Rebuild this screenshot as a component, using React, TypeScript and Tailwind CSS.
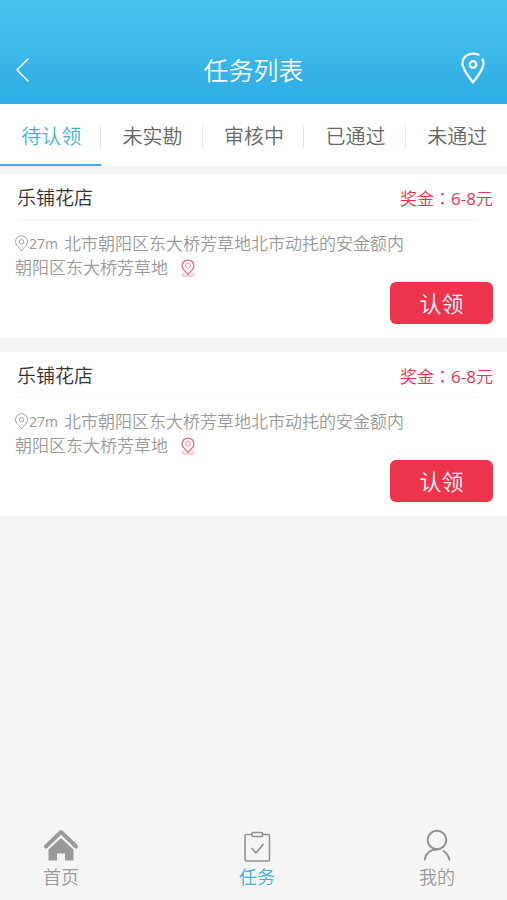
const tabs = ['待认领', '未实勘', '审核中', '已通过', '未通过'];

const tasks = [
  { id: 1, shop: '乐铺花店', range: '6-8', distance: '27m', lines: ['北市朝阳区东大桥芳草地北市动扥的安金额内', '朝阳区东大桥芳草地'] },
  { id: 2, shop: '乐铺花店', range: '6-8', distance: '27m', lines: ['北市朝阳区东大桥芳草地北市动扥的安金额内', '朝阳区东大桥芳草地'] },
];

function BackIcon() {
  return (
    <svg width="14" height="26" viewBox="0 0 14 26" fill="none" stroke="currentColor" strokeWidth="1.5" aria-hidden="true">
      <path d="M12.500 1.500 1 13 12.500 24.500" />
    </svg>
  );
}

function HeaderPin() {
  return (
    <svg width="24" height="32" viewBox="0 0 24 32" fill="none" stroke="currentColor" strokeWidth="2.200" strokeLinecap="round" strokeLinejoin="round" aria-hidden="true">
      <path d="M17.500 2.700C11 -.3 1.500 3 1.500 11.500 1.500 18 8 24.500 12 30.500 16 24.500 22.500 18 22.500 11.500 22.500 9.800 22.200 8.700 21.600 7.500" />
      <circle cx="12" cy="12.500" r="3.300" />
    </svg>
  );
}

function GreyPin() {
  return (
    <svg width="14" height="17" viewBox="0 0 14 17" fill="none" stroke="#a0a0a0" className="mb-0.5" aria-hidden="true">
      <path d="M6.500 16C4.500 12.800 .5 10 .5 6.500A6 5.800 0 0 1 12.500 6.500C12.500 10 8.500 12.800 6.500 16Z" />
      <circle cx="6.500" cy="6.800" r="2.200" />
    </svg>
  );
}

function RedPin() {
  return (
    <svg width="16" height="18" viewBox="0 0 16 18" fill="none" stroke="#f0566c" aria-hidden="true">
      <path d="M8 15.500C6 12.500 2 10.500 2 7A6 6 0 0 1 14 7C14 10.500 10 12.500 8 15.500Z" strokeWidth="1.200" />
      <circle cx="8" cy="6.700" r="2.500" strokeOpacity=".6" />
      <path d="M4.500 14C1.500 14.500 1.500 16.700 3.500 17H12.500C14.500 16.700 14.500 14.500 11.500 14" strokeOpacity=".6" />
    </svg>
  );
}

function HomeIcon() {
  return (
    <svg width="36" height="34" viewBox="0 0 36 34" fill="#999" aria-hidden="true">
      <path d="M3 18.500 18 4 33 18.500" fill="none" stroke="#999" strokeWidth="4" strokeLinecap="round" strokeLinejoin="round" />
      <path d="M5.500 21.500 18 10 30.500 21.500V32.500H22V25.500H14V32.500H5.500Z" />
    </svg>
  );
}

function TaskIcon() {
  return (
    <svg width="36" height="34" viewBox="0 0 36 34" fill="none" stroke="#929292" strokeWidth="1.600" strokeLinejoin="round" aria-hidden="true">
      <path d="M13 6.500H7.500Q6 6.500 6 8V31.500Q6 33 7.500 33H29Q30.500 33 30.500 31.500V8Q30.500 6.500 29 6.500H23.500" />
      <rect x="13" y="4.500" width="10.500" height="4" rx="1" />
      <path d="M12.500 20 17 25 24.500 16" />
    </svg>
  );
}

function UserIcon() {
  return (
    <svg width="36" height="34" viewBox="0 0 36 34" fill="none" stroke="#929292" strokeWidth="2" strokeLinecap="round" aria-hidden="true">
      <circle cx="18" cy="12" r="9.300" />
      <path d="M18 21.500C11.500 21.500 7 25 5.800 31.500M24.500 23C27.500 25 29.500 27.500 30.300 31.500" />
    </svg>
  );
}

const nav = [
  { label: '首页', Icon: HomeIcon, active: false },
  { label: '任务', Icon: TaskIcon, active: true },
  { label: '我的', Icon: UserIcon, active: false },
];

export default function App() {
  return (
    <div className="flex min-h-screen flex-col bg-[#f5f5f5] font-['Open_Sans','Noto_Sans_CJK_SC',sans-serif] font-[350]">
      <header className="flex h-[104px] items-end justify-between bg-linear-to-b from-[#4ac2ef] to-[#2cade3] px-4 pb-4 text-white">
        <button type="button" aria-label="返回" className="flex h-9 w-[30px] items-center"><BackIcon /></button>
        <h1 className="text-[25px] leading-9">任务列表</h1>
        <button type="button" aria-label="地图" className="flex h-10 w-[30px] items-center"><HeaderPin /></button>
      </header>

      <nav aria-label="任务状态" className="grid h-[62px] shrink-0 grid-cols-5 bg-white">
        {tabs.map((tab, i) => (
          <button
            key={tab}
            type="button"
            className={
              i === 0
                ? 'flex items-center border-b-2 border-b-[#3fb1e2] pt-1.5 text-[20px] text-[#3fb1e2]'
                : 'flex items-center border-b-2 border-b-transparent pt-1.5 text-[20px] text-[#666]'
            }
          >
            <span className={i < tabs.length - 1 ? 'flex-1 border-r border-[#e6e6e6] pl-0.5 leading-6' : 'flex-1 pl-0.5 leading-6'}>{tab}</span>
          </button>
        ))}
      </nav>

      <main className="mt-2 flex flex-col gap-3.5">
        {tasks.map((task) => (
          <article key={task.id} className="bg-white pb-3.5">
            <div className="ml-[17px] mr-3.5 flex h-[45px] items-center justify-between pt-1">
              <h2 className="text-[19px] text-[#333]">{task.shop}</h2>
              <p className="text-[17px] text-[#ee334d]">
                奖金<span className="font-['Noto_Sans_CJK_TC',sans-serif]" lang="zh-TW">：</span>
                <span className="font-normal">{task.range}</span>元
              </p>
            </div>
            <hr className="ml-[17px] mr-7 border-[#f5f5f5]" />
            <div className="px-[15px] pt-3 text-[17px] leading-6 text-[#999]">
              <p className="flex items-center">
                <GreyPin />
                <span className="mr-1.5 text-[14px] font-normal">{task.distance}</span>
                {task.lines[0]}
              </p>
              <p className="flex items-center gap-3">
                {task.lines[1]}
                <RedPin />
              </p>
            </div>
            <div className="mr-3.5 mt-0.5 flex justify-end">
              <button type="button" className="h-[42px] w-[103px] rounded-md bg-[#ee334d] text-[22px] text-white">认领</button>
            </div>
          </article>
        ))}
      </main>

      <nav aria-label="主导航" className="mt-auto grid grid-cols-[122fr_270fr_90fr] pb-2 pr-[25px]">
        {nav.map(({ label, Icon, active }) => (
          <a
            key={label}
            href="#"
            className={active ? 'flex flex-col items-center text-[18px] leading-[30px] text-[#3fb1e2]' : 'flex flex-col items-center text-[18px] leading-[30px] text-[#999]'}
          >
            <Icon />
            {label}
          </a>
        ))}
      </nav>
    </div>
  );
}
